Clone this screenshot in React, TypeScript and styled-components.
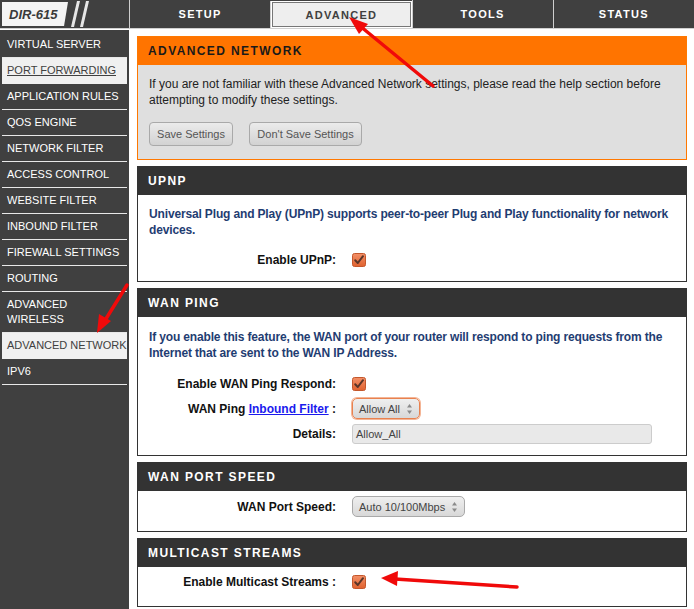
import React from 'react';
import styled, { createGlobalStyle } from 'styled-components';

const GlobalStyle = createGlobalStyle`
  html, body {
    margin: 0;
    padding: 0;
    background: #ffffff;
    font-family: "Liberation Sans", Arial, sans-serif;
  }
`;

const tabs = ['SETUP', 'ADVANCED', 'TOOLS', 'STATUS'];

const menu: { label: string; active?: boolean; underline?: boolean }[] = [
  { label: 'VIRTUAL SERVER' },
  { label: 'PORT FORWARDING', active: true, underline: true },
  { label: 'APPLICATION RULES' },
  { label: 'QOS ENGINE' },
  { label: 'NETWORK FILTER' },
  { label: 'ACCESS CONTROL' },
  { label: 'WEBSITE FILTER' },
  { label: 'INBOUND FILTER' },
  { label: 'FIREWALL SETTINGS' },
  { label: 'ROUTING' },
  { label: 'ADVANCED WIRELESS' },
  { label: 'ADVANCED NETWORK', active: true },
  { label: 'IPV6' },
];

const CheckIcon = () => (
  <svg width="14" height="14" viewBox="0 0 14 14">
    <defs>
      <linearGradient id="cbg" x1="0" y1="0" x2="0" y2="1">
        <stop offset="0" stopColor="#f39068" />
        <stop offset="1" stopColor="#e0622f" />
      </linearGradient>
    </defs>
    <rect x="0.5" y="0.5" width="13" height="13" rx="2" fill="url(#cbg)" stroke="#c4572c" />
    <path d="M3.2 7.2 L5.8 10 L11 3.2" fill="none" stroke="#5a3528" strokeWidth="2" strokeLinecap="round" strokeLinejoin="round" />
  </svg>
);

const Spinner = () => (
  <svg width="7" height="12" viewBox="0 0 7 12">
    <path d="M3.5 1 L6 4.5 H1 Z" fill="#8a8a8a" />
    <path d="M3.5 11 L6 7.5 H1 Z" fill="#8a8a8a" />
  </svg>
);

export default function App() {
  return (
    <>
      <GlobalStyle />
      <Page>
        <TopBar>
          <LogoCell>
            <LogoBox>DIR-615</LogoBox>
            <svg width="22" height="26" viewBox="0 0 22 26">
              <path d="M6 0 L9 0 L3 26 L0 26 Z" fill="#e6e6e6" />
              <path d="M15 0 L18 0 L12 26 L9 26 Z" fill="#e6e6e6" />
            </svg>
          </LogoCell>
          {tabs.map((t) => (
            <Tab key={t} $active={t === 'ADVANCED'}>
              {t}
            </Tab>
          ))}
        </TopBar>

        <Body>
          <Sidebar>
            {menu.map((m) => (
              <MenuItem key={m.label} $active={!!m.active} $underline={!!m.underline}>
                {m.label}
              </MenuItem>
            ))}
          </Sidebar>

          <Content>
            <Panel $tone="orange">
              <PanelHeader $tone="orange">ADVANCED NETWORK</PanelHeader>
              <PanelBody $tone="orange" $pad="11px 11px 13px">
                <Intro>
                  If you are not familiar with these Advanced Network settings, please read the help section before
                  attempting to modify these settings.
                </Intro>
                <ButtonRow>
                  <Button style={{ width: 84 }}>Save Settings</Button>
                  <Button style={{ width: 113 }}>Don't Save Settings</Button>
                </ButtonRow>
              </PanelBody>
            </Panel>

            <Panel $tone="dark">
              <PanelHeader $tone="dark">UPNP</PanelHeader>
              <PanelBody $tone="dark" $pad="11px 8px 11px 11px">
                <Note>
                  Universal Plug and Play (UPnP) supports peer-to-peer Plug and Play functionality for network
                  devices.
                </Note>
                <Rows $top={11}>
                  <FormRow>
                    <Label>Enable UPnP:</Label>
                    <CheckIcon />
                  </FormRow>
                </Rows>
              </PanelBody>
            </Panel>

            <Panel $tone="dark">
              <PanelHeader $tone="dark">WAN PING</PanelHeader>
              <PanelBody $tone="dark" $pad="12px 8px 11px 11px">
                <Note>
                  If you enable this feature, the WAN port of your router will respond to ping requests from the
                  Internet that are sent to the WAN IP Address.
                </Note>
                <Rows $top={12}>
                  <FormRow>
                    <Label>Enable WAN Ping Respond:</Label>
                    <CheckIcon />
                  </FormRow>
                  <FormRow>
                    <Label>
                      WAN Ping <LabelLink>Inbound Filter</LabelLink> :
                    </Label>
                    <SelectBox $focused style={{ width: 68 }}>
                      Allow All
                      <Spinner />
                    </SelectBox>
                  </FormRow>
                  <FormRow>
                    <Label>Details:</Label>
                    <TextInput>Allow_All</TextInput>
                  </FormRow>
                </Rows>
              </PanelBody>
            </Panel>

            <Panel $tone="dark">
              <PanelHeader $tone="dark">WAN PORT SPEED</PanelHeader>
              <PanelBody $tone="dark" $pad="5px 11px 14px">
                <FormRow>
                  <Label>WAN Port Speed:</Label>
                  <SelectBox style={{ width: 113 }}>
                    Auto 10/100Mbps
                    <Spinner />
                  </SelectBox>
                </FormRow>
              </PanelBody>
            </Panel>

            <Panel $tone="dark">
              <PanelHeader $tone="dark">MULTICAST STREAMS</PanelHeader>
              <PanelBody $tone="dark" $pad="4px 11px 14px">
                <FormRow>
                  <Label>Enable Multicast Streams :</Label>
                  <CheckIcon />
                </FormRow>
              </PanelBody>
            </Panel>
          </Content>
        </Body>

        <Arrows width="694" height="609" viewBox="0 0 694 609">
          <g stroke="#f00a0a" strokeWidth="3.5" strokeLinecap="round" fill="#f00a0a">
            <line x1="433" y1="86" x2="360" y2="26" />
            <path d="M349 17 L368 24 L359 34 Z" stroke="none" />
            <line x1="127" y1="285" x2="104" y2="322" />
            <path d="M97 333 L99 314 L111 321 Z" stroke="none" />
            <line x1="517" y1="587" x2="395" y2="579" />
            <path d="M381 578 L398 571 L397 586 Z" stroke="none" />
          </g>
        </Arrows>
      </Page>
    </>
  );
}

const Page = styled.div`
  position: relative;
  width: 694px;
  height: 609px;
  overflow: hidden;
  display: flex;
  flex-direction: column;
  background: #ffffff;
`;

const TopBar = styled.div`
  display: grid;
  grid-template-columns: 129px repeat(4, 1fr);
  height: 28px;
  background: #404040;
  border-bottom: 1px solid #d0d0d0;
  flex-shrink: 0;
`;

const LogoCell = styled.div`
  display: flex;
  align-items: center;
  gap: 3px;
  padding-left: 2px;
`;

const LogoBox = styled.div`
  width: 66px;
  height: 24px;
  background: #f4f4f4;
  clip-path: polygon(0 0, 100% 0, 94% 100%, 0 100%);
  display: flex;
  align-items: center;
  padding-left: 7px;
  box-sizing: border-box;
  font-size: 13px;
  font-weight: bold;
  font-style: italic;
  color: #3a3a3a;
`;

const Tab = styled.div<{ $active: boolean }>`
  display: flex;
  align-items: center;
  justify-content: center;
  border-left: 1px solid #cfcfcf;
  font-size: 11px;
  font-weight: bold;
  letter-spacing: 1.3px;
  color: ${(p) => (p.$active ? '#404040' : '#ffffff')};
  background: ${(p) => (p.$active ? '#eeeeee' : 'transparent')};
  box-shadow: ${(p) => (p.$active ? 'inset 0 0 0 1px #ffffff, inset 0 0 0 2px #777777' : 'none')};
  margin: ${(p) => (p.$active ? '1px 0 0' : '0')};
`;

const Body = styled.div`
  display: flex;
  flex: 1;
  min-height: 0;
  padding-top: 1px;
`;

const Sidebar = styled.div`
  width: 129px;
  flex-shrink: 0;
  background: #404040;
  padding-top: 2px;
  box-sizing: border-box;
`;

const MenuItem = styled.div<{ $active: boolean; $underline: boolean }>`
  margin: 0 2px;
  padding: 5px 0 5px 5px;
  line-height: 15px;
  font-size: 11px;
  color: ${(p) => (p.$active ? '#404040' : '#ffffff')};
  background: ${(p) => (p.$active ? '#f0f0f0' : 'transparent')};
  text-decoration: ${(p) => (p.$underline ? 'underline' : 'none')};
  white-space: ${(p) => (p.$active ? 'nowrap' : 'normal')};
  overflow: hidden;
  border-bottom: 1px solid ${(p) => (p.$active ? '#f0f0f0' : '#e8e8e8')};
`;

const Content = styled.div`
  flex: 1;
  padding: 6px 7px 0 8px;
  display: flex;
  flex-direction: column;
  gap: 6px;
`;

type Tone = 'orange' | 'dark';

const Panel = styled.div<{ $tone: Tone }>`
  border: 1px solid ${(p) => (p.$tone === 'orange' ? '#ff7800' : '#333333')};
`;

const PanelHeader = styled.div<{ $tone: Tone }>`
  height: 28px;
  display: flex;
  align-items: center;
  padding: 0 10px;
  font-size: 12px;
  font-weight: bold;
  letter-spacing: 1.4px;
  background: ${(p) => (p.$tone === 'orange' ? '#ff7400' : '#333333')};
  color: ${(p) => (p.$tone === 'orange' ? '#1a1a1a' : '#ffffff')};
`;

const PanelBody = styled.div<{ $tone: Tone; $pad: string }>`
  padding: ${(p) => p.$pad};
  background: ${(p) => (p.$tone === 'orange' ? '#dfdfdf' : '#ffffff')};
`;

const Intro = styled.div`
  font-size: 12px;
  line-height: 16px;
  color: #222222;
`;

const Note = styled.div`
  font-size: 12px;
  line-height: 16px;
  font-weight: bold;
  letter-spacing: -0.15px;
  color: #1f3d72;
`;

const ButtonRow = styled.div`
  display: flex;
  gap: 16px;
  margin-top: 14px;
`;

const Button = styled.div`
  height: 24px;
  box-sizing: border-box;
  display: flex;
  align-items: center;
  justify-content: center;
  border: 1px solid #a9a9a9;
  border-radius: 4px;
  background: linear-gradient(#ebebeb, #d2d2d2);
  font-size: 11px;
  color: #555555;
`;

const Rows = styled.div<{ $top: number }>`
  display: flex;
  flex-direction: column;
  gap: 4px;
  margin-top: ${(p) => p.$top}px;
`;

const FormRow = styled.div`
  display: grid;
  grid-template-columns: 187px auto;
  column-gap: 16px;
  align-items: center;
  justify-items: start;
  min-height: 21px;
`;

const Label = styled.div`
  justify-self: end;
  font-size: 12px;
  font-weight: bold;
  color: #111111;
`;

const LabelLink = styled.span`
  color: #1a1aee;
  text-decoration: underline;
`;

const SelectBox = styled.div<{ $focused?: boolean }>`
  height: 21px;
  box-sizing: border-box;
  display: flex;
  align-items: center;
  justify-content: space-between;
  padding: 0 6px;
  border: 1px solid ${(p) => (p.$focused ? '#e8814f' : '#a9a9a9')};
  box-shadow: ${(p) => (p.$focused ? '0 0 0 1px #f4b596' : 'none')};
  border-radius: 5px;
  background: linear-gradient(#efefef, #d8d8d8);
  font-size: 11px;
  color: #444444;
`;

const TextInput = styled.div`
  width: 300px;
  height: 20px;
  box-sizing: border-box;
  display: flex;
  align-items: center;
  padding: 0 3px;
  border: 1px solid #cccccc;
  border-radius: 3px;
  background: #e9e9e9;
  font-size: 11px;
  color: #444444;
`;

const Arrows = styled.svg`
  position: absolute;
  left: 0;
  top: 0;
  pointer-events: none;
`;
